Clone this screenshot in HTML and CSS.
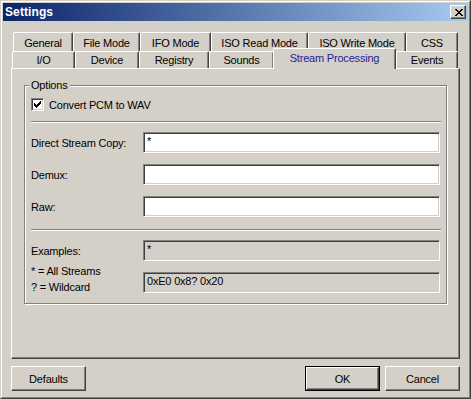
FILE: index.html
```html
<!DOCTYPE html>
<html>
<head>
<meta charset="utf-8">
<title>Settings</title>
<link rel="stylesheet" href="styles.css">
</head>
<body>
<div class="window">
  <div class="frame">
    <div class="caption">
      <span class="title">Settings</span>
      <span class="close-btn">
        <svg width="8" height="7" viewBox="0 0 8 7" shape-rendering="crispEdges">
          <path d="M0 0h2v1h-2zM6 0h2v1h-2zM1 1h2v1h-2zM5 1h2v1h-2zM2 2h4v1h-4zM3 3h2v1h-2zM2 4h4v1h-4zM1 5h2v1h-2zM5 5h2v1h-2zM0 6h2v1h-2zM6 6h2v1h-2z" fill="#000"/>
        </svg>
      </span>
    </div>
    <div class="client">
      <div class="tabs">
        <div class="tabrow row1">
          <div class="tab w-general">General</div>
          <div class="tab w-filemode">File Mode</div>
          <div class="tab w-ifomode">IFO Mode</div>
          <div class="tab w-isoread">ISO Read Mode</div>
          <div class="tab w-isowrite">ISO Write Mode</div>
          <div class="tab w-css">CSS</div>
        </div>
        <div class="tabrow row2">
          <div class="tab w-io">I/O</div>
          <div class="tab w-device">Device</div>
          <div class="tab w-registry">Registry</div>
          <div class="tab w-sounds">Sounds</div>
          <div class="tab selected w-stream">Stream Processing</div>
          <div class="tab w-events">Events</div>
        </div>
      </div>
      <div class="panel">
        <div class="group">
          <span class="group-label">Options</span>
          <div class="check-row">
            <span class="checkbox">
              <svg width="7" height="7" viewBox="0 0 7 7" shape-rendering="crispEdges">
                <path d="M6 0h1v1h-1zM5 1h2v1h-2zM0 2h1v1h-1zM4 2h3v1h-3zM0 3h2v1h-2zM3 3h3v1h-3zM0 4h5v1h-5zM1 5h3v1h-3zM2 6h1v1h-1z" fill="#000"/>
              </svg>
            </span>
            <span class="check-label">Convert PCM to WAV</span>
          </div>
          <div class="sep sep1"></div>
          <div class="field-row first">
            <span class="lbl">Direct Stream Copy:</span>
            <div class="edit">*</div>
          </div>
          <div class="field-row">
            <span class="lbl">Demux:</span>
            <div class="edit"></div>
          </div>
          <div class="field-row">
            <span class="lbl">Raw:</span>
            <div class="edit"></div>
          </div>
          <div class="sep sep2"></div>
          <div class="field-row first">
            <span class="lbl">Examples:</span>
            <div class="edit readonly">*</div>
          </div>
          <div class="field-row legend-row">
            <div class="lbl legend">
              <div>* = All Streams</div>
              <div>? = Wildcard</div>
            </div>
            <div class="edit readonly">0xE0 0x8? 0x20</div>
          </div>
        </div>
      </div>
      <div class="buttons">
        <div class="btn">Defaults</div>
        <div class="spacer"></div>
        <div class="btn default"><span class="btn-inner">OK</span></div>
        <div class="btn">Cancel</div>
      </div>
    </div>
  </div>
</div>
</body>
</html>
```

FILE: styles.css
```css
html, body {
  margin: 0;
  padding: 0;
  background: #d4d0c8;
}

body {
  font-family: "Liberation Sans", Arial, sans-serif;
  font-size: 11px;
  letter-spacing: -0.2px;
  color: #000;
}

.window {
  width: 471px;
  height: 399px;
  box-sizing: border-box;
  border: 1px solid;
  border-color: #d4d0c8 #404040 #404040 #d4d0c8;
  background: #d4d0c8;
}

.frame {
  height: 100%;
  box-sizing: border-box;
  border: 1px solid;
  border-color: #fff #808080 #808080 #fff;
  padding: 1px;
}

.caption {
  height: 18px;
  display: flex;
  align-items: center;
  padding-left: 2px;
  background: linear-gradient(to right, #0a246a, #a6caf0);
}

.title {
  color: #fff;
  font-weight: bold;
  font-size: 12px;
  letter-spacing: 0.1px;
}

.close-btn {
  margin-left: auto;
  margin-right: 2px;
  width: 16px;
  height: 14px;
  box-sizing: border-box;
  border: 1px solid;
  border-color: #fff #404040 #404040 #fff;
  box-shadow: inset -1px -1px 0 #808080;
  background: #d4d0c8;
  display: flex;
  align-items: flex-start;
  justify-content: flex-start;
  padding: 3px 0 0 4px;
}

.close-btn svg {
  display: block;
}

.client {
  padding: 11px 8px 0 8px;
}

.tabs {
  display: flex;
  flex-direction: column;
}

.tabrow {
  display: flex;
}

.row1 {
  height: 19px;
  padding-left: 2px;
}

.row2 {
  height: 17px;
  padding-left: 1px;
}

.tab {
  box-sizing: border-box;
  height: 100%;
  border-top: 1px solid #fff;
  border-left: 1px solid #fff;
  border-right: 1px solid #404040;
  border-radius: 2px 2px 0 0;
  box-shadow: inset -1px 0 0 #808080;
  background: #d4d0c8;
  display: flex;
  align-items: center;
  justify-content: center;
  white-space: nowrap;
}

.row1 .tab {
  padding-top: 1px;
}

.row2 .tab {
  padding-top: 0;
}

.tab.selected {
  position: relative;
  z-index: 2;
  height: 21px;
  margin-top: -3px;
  margin-left: -1px;
  color: #1c1ca0;
  padding-bottom: 2px;
}

.w-general { width: 60px; }
.w-filemode { width: 67px; }
.w-ifomode { width: 71px; }
.w-isoread { width: 97px; }
.w-isowrite { width: 98px; }
.w-css { width: 52px; }
.w-io { width: 63px; }
.w-device { width: 64px; }
.w-registry { width: 70px; }
.w-sounds { width: 65px; }
.w-stream { width: 123px; }
.w-events { width: 62px; }

.panel {
  height: 291px;
  box-sizing: border-box;
  border: 1px solid;
  border-color: #fff #404040 #404040 #fff;
  box-shadow: inset -1px -1px 0 #808080;
  padding: 16px 0 0 12px;
}

.group {
  position: relative;
  width: 423px;
  height: 219px;
  box-sizing: border-box;
  border: 1px solid #808080;
  box-shadow: inset 1px 1px 0 #fff, 1px 1px 0 #fff;
  padding: 12px 0 0 6px;
}

.group-label {
  position: absolute;
  top: -7px;
  left: 4px;
  padding: 0 2px;
  background: #d4d0c8;
  line-height: 13px;
}

.check-row {
  display: flex;
  align-items: center;
  height: 13px;
}

.checkbox {
  width: 13px;
  height: 13px;
  box-sizing: border-box;
  border: 1px solid;
  border-color: #808080 #fff #fff #808080;
  box-shadow: inset 1px 1px 0 #404040, inset -1px -1px 0 #d4d0c8;
  background: #fff;
  padding: 2px 0 0 2px;
  flex: none;
}

.checkbox svg {
  display: block;
}

.check-label {
  margin-left: 5px;
}

.sep {
  width: 410px;
  height: 0;
  border-top: 1px solid #808080;
  border-bottom: 1px solid #fff;
}

.sep1 {
  margin-top: 10px;
}

.sep2 {
  margin-top: 12px;
}

.field-row {
  display: flex;
  align-items: center;
  margin-top: 11px;
}

.field-row.first {
  margin-top: 9px;
}

.lbl {
  width: 112px;
  flex: none;
}

.edit {
  width: 297px;
  height: 21px;
  box-sizing: border-box;
  border: 1px solid;
  border-color: #808080 #fff #fff #808080;
  box-shadow: inset 1px 1px 0 #404040, inset -1px -1px 0 #d4d0c8;
  background: #fff;
  padding: 2px 0 0 3px;
  line-height: 13px;
}

.edit.readonly {
  background: #d4d0c8;
}

.legend-row {
  align-items: flex-start;
}

.legend {
  margin-top: -9px;
  line-height: 16px;
}

.buttons {
  display: flex;
  margin-top: 7px;
  gap: 5px;
}

.spacer {
  flex: 1;
}

.btn {
  width: 75px;
  height: 25px;
  box-sizing: border-box;
  border: 1px solid;
  border-color: #fff #404040 #404040 #fff;
  box-shadow: inset -1px -1px 0 #808080;
  display: flex;
  align-items: center;
  justify-content: center;
}

.btn.default {
  border: 1px solid #000;
  box-shadow: none;
  padding: 0;
}

.btn-inner {
  width: 100%;
  height: 100%;
  box-sizing: border-box;
  border: 1px solid;
  border-color: #fff #404040 #404040 #fff;
  box-shadow: inset -1px -1px 0 #808080;
  display: flex;
  align-items: center;
  justify-content: center;
}
```
